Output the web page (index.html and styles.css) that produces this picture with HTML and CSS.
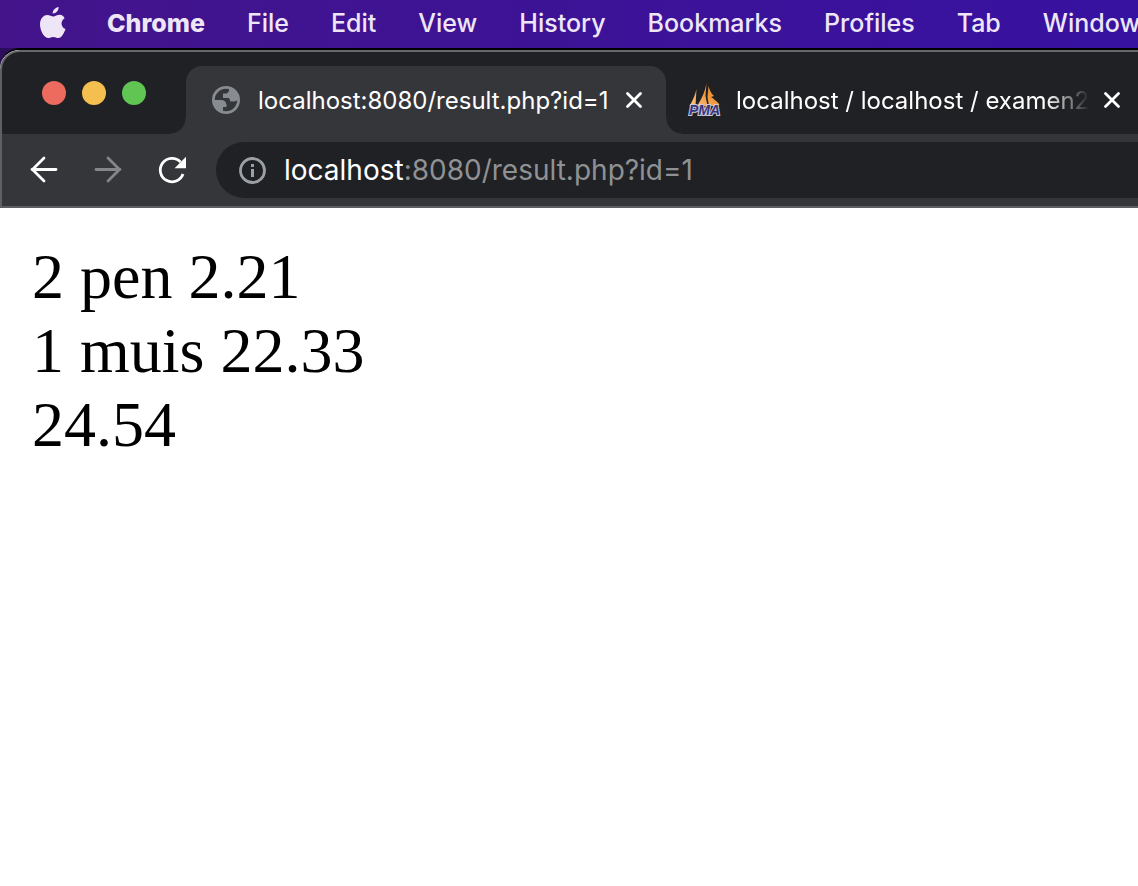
FILE: index.html
```
<!DOCTYPE html>
<html lang="en">
<head>
<meta charset="utf-8">
<title>localhost:8080/result.php?id=1</title>
<link rel="stylesheet" href="styles.css">
</head>
<body>
<nav class="menubar" aria-label="Menu bar">
  <button class="apple" aria-label="Apple menu">
    <svg width="25" height="32" viewBox="0 0 25 32"><path fill="currentColor" d="M18.600 0c.3 3.200-2.500 6.600-5.900 6.500C12.400 3.500 15.500.4 18.600 0zM24.600 11.200c-4.600 3-3.700 8.900.9 10.900-1.300 4-4 9-7 9-2.200 0-2.800-1.200-5.300-1.200S10.300 31 8.300 31C4.200 31 0 23.600 0 17.400 0 11.400 3.600 8 7.300 8c2.500 0 4.200 1.500 6.100 1.500C15.200 9.500 16.900 7.800 20 7.800c2 0 3.600 1.400 4.600 3.400z"/></svg>
  </button>
  <button class="menu menu-app">Chrome</button>
  <button class="menu">File</button>
  <button class="menu">Edit</button>
  <button class="menu">View</button>
  <button class="menu">History</button>
  <button class="menu">Bookmarks</button>
  <button class="menu">Profiles</button>
  <button class="menu">Tab</button>
  <button class="menu">Window</button>
</nav>
<div class="desktop">
<div class="window">
  <header class="tabstrip">
    <div class="lights">
      <button class="light red" aria-label="Close window"></button>
      <button class="light yellow" aria-label="Minimize window"></button>
      <button class="light green" aria-label="Zoom window"></button>
    </div>
    <div class="tab active">
      <svg class="globe" width="28" height="28" viewBox="0 0 28 28"><circle cx="14" cy="14" r="12.600" fill="none" stroke="#878c91" stroke-width="2.800"/><path fill="#878c91" d="M1.500 14H9q5 0 5.500 4.800V21h-3.500v5L8 25.500C4 23 1.500 19 1.500 14zM17 2c6 1 9.500 6 9.500 11q-2 2.500-5 2.500h-3l-1.500-3.500h-6V7.500H15L17 5z"/></svg>
      <span class="title">localhost:8080/result.php?id=1</span>
      <button class="close" aria-label="Close tab"><svg width="16" height="16" viewBox="0 0 16 16"><path d="M1.500 1.500l13 13M14.500 1.500l-13 13" stroke="currentColor" stroke-width="2.800" stroke-linecap="round"/></svg></button>
    </div>
    <div class="tab">
      <svg class="pma" width="32" height="34" viewBox="0 0 32 34"><defs><linearGradient id="sail" x1="0" x2="1" y1="1" y2="0"><stop offset="0" stop-color="#fbc583"/><stop offset=".5" stop-color="#f19a3e"/><stop offset="1" stop-color="#e8821f"/></linearGradient></defs><path fill="url(#sail)" d="M8.500 6L7.500 23H1.500C4.500 18 7.500 11 8.500 6zM18.500 0l-1 13 2 10H9C13 17 17 9 18.500 0zM20.500 3c1.500 5 3 8 5.500 10l-3 1c3 2 6 4.500 8.500 7.500L28 23h-7l-1.500-9z"/><text class="pma-text" x="1" y="32">PMA</text></svg>
      <span class="title fade">localhost / localhost / examen2</span>
      <button class="close" aria-label="Close tab"><svg width="16" height="16" viewBox="0 0 16 16"><path d="M1.500 1.500l13 13M14.500 1.500l-13 13" stroke="currentColor" stroke-width="2.800" stroke-linecap="round"/></svg></button>
    </div>
  </header>
  <div class="toolbar">
    <button class="nav" aria-label="Back"><svg width="28" height="28" viewBox="0 0 28 28"><path d="M26 13.500H2M14 2L2.500 13.500 14 25" fill="none" stroke="currentColor" stroke-width="2.800" stroke-linecap="round" stroke-linejoin="round"/></svg></button>
    <button class="nav" aria-label="Forward" disabled><svg width="28" height="28" viewBox="0 0 28 28"><path d="M2 13.500h24M14 2l11.500 11.500L14 25" fill="none" stroke="currentColor" stroke-width="2.800" stroke-linecap="round" stroke-linejoin="round"/></svg></button>
    <button class="nav" aria-label="Reload"><svg width="28" height="28" viewBox="0 0 28 28"><path d="M25 18A11.700 11.700 0 1 1 22.500 6" fill="none" stroke="currentColor" stroke-width="2.800"/><path fill="currentColor" d="M28 .8v11.400H16.600z"/></svg></button>
    <div class="omnibox">
      <svg width="28" height="28" viewBox="0 0 28 28"><circle cx="14.500" cy="14.500" r="12" fill="none" stroke="#9aa0a6" stroke-width="2.800"/><path fill="#9aa0a6" d="M13 8h3v3h-3zM13 13h3v8h-3z"/></svg>
      <a class="url" href="#"><span class="host">localhost</span>:8080/result.php?id=1</a>
    </div>
  </div>
  <main class="page">2 pen 2.21<br>1 muis 22.33<br>24.54</main>
</div>
</div>
</body>
</html>
```
FILE: styles.css
```
* { box-sizing: border-box; }
body {
  margin: 0;
  min-height: 100vh;
  display: flex;
  flex-direction: column;
  overflow: hidden;
  font-family: Inter, "Liberation Sans", sans-serif;
}
button {
  border: 0;
  padding: 0;
  background: none;
  color: inherit;
  font: inherit;
  flex: none;
}
svg { display: block; flex: none; overflow: visible; }
.menubar {
  display: flex;
  align-items: center;
  gap: 42px;
  height: 48px;
  padding: 0 0 2px 40px;
  background: linear-gradient(90deg, #43148a, #3a129b 70%, #3711a0);
  color: #eee6f7;
  font-size: 25px;
  font-weight: 500;
  text-shadow: 0 2px 5px rgba(0, 0, 0, .3);
}
.menubar .menu-app { font-weight: 800; }
.desktop {
  display: flex;
  flex: 1;
  background: #2c0d5c;
}
.window {
  flex: 1;
  min-width: 0;
  display: flex;
  flex-direction: column;
  border-top: 2px solid #000;
  border-top-left-radius: 20px;
  background: #fff;
  overflow: hidden;
}
.tabstrip {
  display: flex;
  align-items: flex-end;
  height: 84px;
  border-top: 2px solid #67686b;
  border-left: 2px solid #5f6063;
  border-top-left-radius: 20px;
  background: #202124;
}
.lights {
  display: flex;
  gap: 16px;
  width: 184px;
  padding: 0 0 29px 40px;
  flex: none;
}
.light { width: 24px; height: 24px; border-radius: 50%; }
.red { background: #ed6a5e; }
.yellow { background: #f5bf4f; }
.green { background: #61c554; }
.tab {
  position: relative;
  display: flex;
  align-items: center;
  flex: none;
  width: 480px;
  height: 68px;
  padding: 0 24px 0 26px;
  color: #fff;
  font-size: 24px;
}
.tab + .tab { padding: 0 16px 0 22px; width: 470px; }
.active { background: #35363a; border-radius: 16px 16px 0 0; }
.active::before,
.active::after {
  content: "";
  position: absolute;
  bottom: 0;
  width: 16px;
  height: 16px;
}
.active::before {
  right: 100%;
  background: radial-gradient(circle at 0 0, transparent 15px, #35363a 16px);
}
.active::after {
  left: 100%;
  background: radial-gradient(circle at 100% 0, transparent 15px, #35363a 16px);
}
.title {
  flex: 1;
  min-width: 0;
  margin: 0 16px 0 18px;
  overflow: hidden;
  white-space: nowrap;
}
.tab + .tab .title { margin: 0 14px 0 16px; }
.fade {
  -webkit-mask-image: linear-gradient(90deg, #000 calc(100% - 44px), transparent);
  mask-image: linear-gradient(90deg, #000 calc(100% - 44px), transparent);
}
.pma-text {
  font: italic 700 14px "Liberation Sans", sans-serif;
  fill: #37357c;
  stroke: #c9c9dd;
  stroke-width: 2px;
  paint-order: stroke;
}
.toolbar {
  display: flex;
  align-items: center;
  gap: 36px;
  height: 74px;
  padding: 0 0 0 28px;
  border-left: 2px solid #5f6063;
  border-bottom: 2px solid #5c5d60;
  background: #35363a;
  color: #fff;
}
.nav:disabled { color: #85868a; }
.omnibox {
  display: flex;
  align-items: center;
  gap: 18px;
  flex: 1;
  height: 56px;
  margin-left: -6px;
  padding-left: 22px;
  border-radius: 28px 0 0 28px;
  background: #202124;
  font-size: 28px;
}
.url { color: #8f9195; text-decoration: none; white-space: nowrap; }
.host { color: #fff; }
.page {
  flex: 1;
  padding: 32px;
  color: #000;
  font-family: "Liberation Serif", "Times New Roman", serif;
  font-size: 64px;
  line-height: 74px;
}
```
